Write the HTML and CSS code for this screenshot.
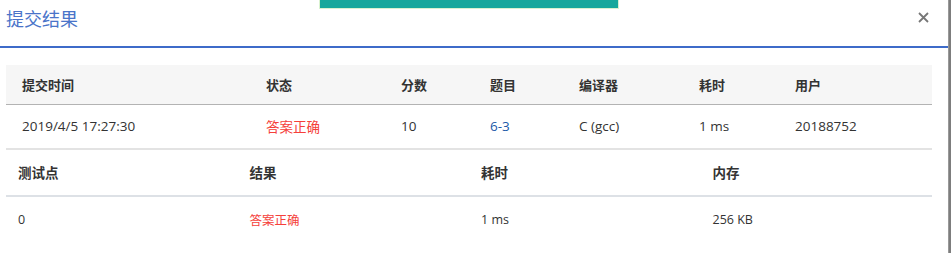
FILE: index.html
```html
<!DOCTYPE html>
<html>
<head>
<meta charset="utf-8">
<link rel="stylesheet" href="styles.css">
</head>
<body>
<div class="page">
  <div class="modal">
    <div class="toast"></div>
    <div class="modal-header">
      <h1 class="title">提交结果</h1>
      <span class="close">
        <svg width="11" height="11" viewBox="0 0 11 11"><path d="M1 1L10 10M10 1L1 10" stroke="#777" stroke-width="1.8" fill="none"/></svg>
      </span>
    </div>
    <div class="modal-body">
      <div class="summary">
        <div class="row head">
          <div class="c">提交时间</div>
          <div class="c">状态</div>
          <div class="c">分数</div>
          <div class="c">题目</div>
          <div class="c">编译器</div>
          <div class="c">耗时</div>
          <div class="c">用户</div>
        </div>
        <div class="row data">
          <div class="c">2019/4/5 17:27:30</div>
          <div class="c ok">答案正确</div>
          <div class="c">10</div>
          <div class="c link">6-3</div>
          <div class="c">C (gcc)</div>
          <div class="c">1 ms</div>
          <div class="c">20188752</div>
        </div>
      </div>
      <div class="cases">
        <div class="row2 head2">
          <div class="c2">测试点</div>
          <div class="c2">结果</div>
          <div class="c2">耗时</div>
          <div class="c2">内存</div>
        </div>
        <div class="row2 data2">
          <div class="c2">0</div>
          <div class="c2 ok">答案正确</div>
          <div class="c2">1 ms</div>
          <div class="c2">256 KB</div>
        </div>
      </div>
    </div>
  </div>
  <div class="scrollbar"></div>
</div>
</body>
</html>
```

FILE: styles.css
```css
* { box-sizing: border-box; }
html, body { margin: 0; padding: 0; }
body {
  font-family: "Open Sans", "Noto Sans CJK SC", sans-serif;
  color: #333;
  background: #fff;
}
.page {
  display: flex;
  width: 951px;
  height: 253px;
  overflow: hidden;
}
.modal {
  position: relative;
  width: 948px;
  background: #fff;
}
.scrollbar {
  width: 3px;
  background: #7d7d7d;
  border-left: 1px solid #999;
}
.toast {
  position: absolute;
  left: 319px;
  top: 0;
  width: 300px;
  height: 9px;
  background: #17a89c;
  border: 1px solid #d9f2cf;
  border-top: none;
}
.modal-header {
  position: relative;
  height: 48px;
  border-bottom: 2px solid #3d6bc9;
  padding-left: 6px;
}
.title {
  margin: 0;
  padding-top: 5px;
  font-family: "Noto Sans CJK SC", sans-serif;
  font-size: 18px;
  font-weight: 400;
  line-height: 26px;
  color: #4a74c9;
}
.close {
  position: absolute;
  right: 19px;
  top: 12px;
  width: 11px;
  height: 11px;
  display: block;
}
.close svg { display: block; }
.modal-body {
  padding: 17px 16px 0 6px;
}
.row {
  display: grid;
  grid-template-columns: 244px 135px 89px 89px 120px 96px 1fr;
  align-items: center;
}
.c { padding-left: 16px; white-space: nowrap; }
.head {
  height: 40px;
  background: #f6f6f6;
  border-bottom: 1px solid #b3b3b3;
  font-size: 13px;
  font-weight: 600;
  font-family: "Noto Sans CJK SC", sans-serif;
}
.data {
  height: 45px;
  border-bottom: 2px solid #e3e3e3;
  font-size: 13.5px;
  padding-bottom: 1px;
}
.ok { color: #f5403a; font-family: "Noto Sans CJK SC", sans-serif; }
.link { color: #205aa8; }
.row2 {
  display: grid;
  grid-template-columns: repeat(4, 1fr);
  align-items: center;
}
.c2 { padding-left: 12px; white-space: nowrap; }
.head2 {
  height: 47px;
  border-bottom: 2px solid #dde1e6;
  font-size: 13.5px;
  font-weight: 600;
  font-family: "Noto Sans CJK SC", sans-serif;
  padding-bottom: 1px;
}
.data2 {
  height: 44px;
  font-size: 12.5px;
}
```
